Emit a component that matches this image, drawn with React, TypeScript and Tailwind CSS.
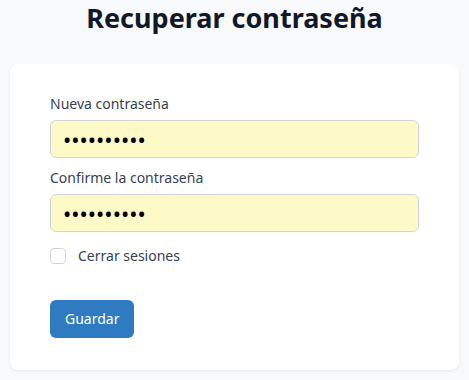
export default function App() {
  return (
    <div
      className="min-h-screen bg-[#f8f9fb] px-[10px] pt-px pb-4"
      style={{ fontFamily: '"Noto Sans", "Open Sans", sans-serif' }}
    >
      <h1 className="text-center text-[27px] font-bold leading-[33px] text-[#111827]">
        Recuperar contraseña
      </h1>
      <div className="mt-[30px] rounded-lg bg-white px-10 pt-[30px] pb-8 shadow-[0_1px_3px_rgba(0,0,0,0.08)]">
        <label className="block text-sm text-[#374151] mb-[6px] leading-5">Nueva contraseña</label>
        <input
          type="password"
          defaultValue="contrasena"
          className="block h-[38px] w-full rounded-md border border-[#d1d5db] bg-[#fefac8] px-3 text-[22px] text-black outline-none"
        />
        <label className="mt-[10px] block text-sm text-[#374151] mb-[6px] leading-5">Confirme la contraseña</label>
        <input
          type="password"
          defaultValue="contrasena"
          className="block h-[38px] w-full rounded-md border border-[#d1d5db] bg-[#fefac8] px-3 text-[22px] text-black outline-none"
        />
        <label className="mt-[14px] flex items-center gap-3 text-sm text-[#374151]">
          <span className="h-4 w-4 rounded border border-[#d1d5db] bg-white" />
          Cerrar sesiones
        </label>
        <button className="mt-[34px] h-[38px] rounded-md bg-[#2f7bc1] px-[15px] text-sm text-white">
          Guardar
        </button>
      </div>
    </div>
  );
}
